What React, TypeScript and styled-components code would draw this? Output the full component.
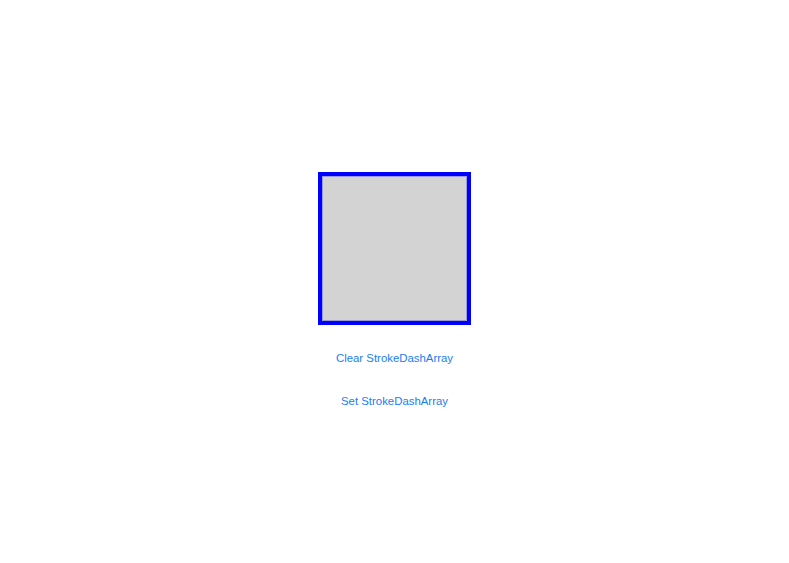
import styled, { createGlobalStyle } from "styled-components";

const GlobalStyle = createGlobalStyle`
  html, body {
    margin: 0;
    padding: 0;
    background: #ffffff;
  }
  body {
    font-family: "Liberation Sans", Arial, sans-serif;
  }
`;

const Page = styled.div`
  width: 789px;
  height: 563px;
  display: flex;
  flex-direction: column;
  align-items: center;
  padding-top: 172px;
  box-sizing: border-box;
  background: #ffffff;
  border-radius: 0 0 12px 12px;
  overflow: hidden;
`;

const Square = styled.div`
  width: 153px;
  height: 153px;
  box-sizing: border-box;
  background: #d3d3d3;
  border: 4px solid #0000ff;
  box-shadow: inset 0 0 0 1px #9a9ad8;
`;

const Buttons = styled.div`
  display: flex;
  flex-direction: column;
  align-items: center;
  margin-top: 23px;
  gap: 23px;
`;

const LinkButton = styled.button`
  border: none;
  background: transparent;
  padding: 0;
  height: 20px;
  line-height: 20px;
  font-family: "Liberation Sans", Arial, sans-serif;
  font-size: 11.4px;
  color: #1a7cf5;
  cursor: pointer;
`;

export default function App() {
  return (
    <>
      <GlobalStyle />
      <Page>
        <Square />
        <Buttons>
          <LinkButton>Clear StrokeDashArray</LinkButton>
          <LinkButton>Set StrokeDashArray</LinkButton>
        </Buttons>
      </Page>
    </>
  );
}
